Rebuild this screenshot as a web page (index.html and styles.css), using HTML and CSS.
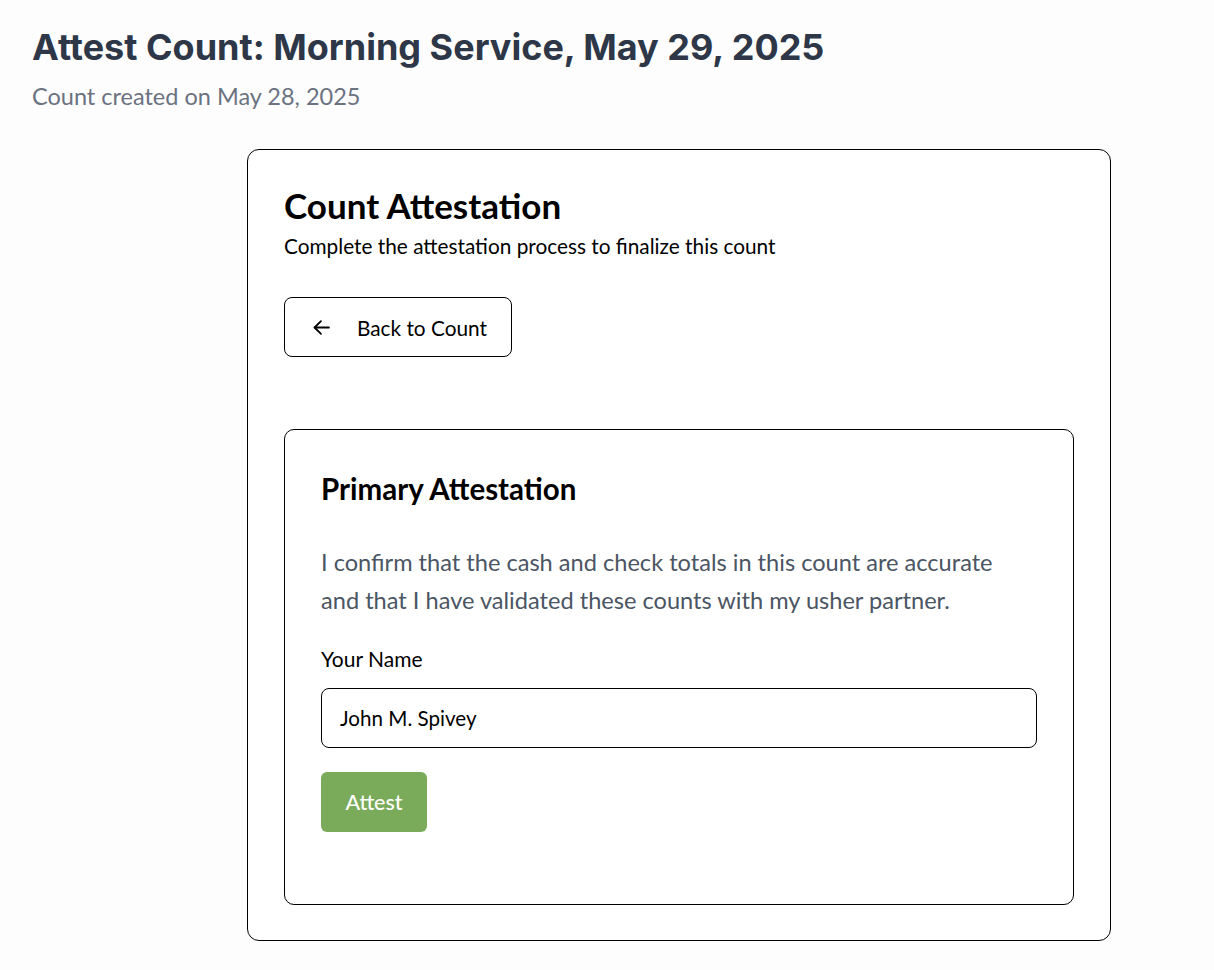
FILE: index.html
```html
<!DOCTYPE html>
<html lang="en">
<head>
<meta charset="utf-8">
<title>Attest Count</title>
<link rel="stylesheet" href="styles.css">
</head>
<body>
<div class="page">
  <header class="page-header">
    <h1 class="page-title">Attest Count: Morning Service, May 29, 2025</h1>
    <p class="page-subtitle">Count created on May 28, 2025</p>
  </header>
  <main class="content">
    <section class="card">
      <h2 class="card-title">Count Attestation</h2>
      <p class="card-desc">Complete the attestation process to finalize this count</p>
      <button class="back-btn" type="button">
        <svg class="back-icon" width="17" height="17" viewBox="0 0 16 16" fill="none" stroke="#000" stroke-width="1.7" stroke-linecap="round" stroke-linejoin="round"><path d="M15 8H1.5"/><path d="M7.5 2L1.5 8l6 6"/></svg>
        <span>Back to Count</span>
      </button>
      <section class="inner-card">
        <h3 class="inner-title">Primary Attestation</h3>
        <p class="statement">I confirm that the cash and check totals in this count are accurate and that I have validated these counts with my usher partner.</p>
        <label class="field-label" for="name">Your Name</label>
        <input class="field-input" id="name" type="text" value="John M. Spivey">
        <button class="attest-btn" type="button">Attest</button>
      </section>
    </section>
  </main>
</div>
</body>
</html>
```
FILE: styles.css
```css
* { box-sizing: border-box; }
html, body { margin: 0; padding: 0; background: #fdfdfd; }
body { font-family: Lato, "Noto Sans", sans-serif; color: #000; }
.page { padding: 24px 32px 40px; }
.page-header { margin-bottom: 38px; }
.page-title {
  margin: 0;
  font-family: Inter, "Liberation Sans", sans-serif;
  font-weight: 700;
  font-size: 36px;
  line-height: 46px;
  color: #2d3748;
}
.page-subtitle {
  margin: 11px 0 0;
  font-size: 23.5px;
  line-height: 30px;
  color: #6b7280;
}
.content { padding-left: 215px; }
.card {
  width: 864px;
  border: 1px solid #000;
  border-radius: 12px;
  padding: 33px 36px 35px;
  background: #fff;
}
.card-title {
  margin: 0;
  font-size: 35px;
  font-weight: 700;
  line-height: 44px;
}
.card-desc {
  margin: 6px 0 0;
  font-size: 20.8px;
  line-height: 26px;
}
.back-btn {
  margin-top: 38px;
  display: flex;
  align-items: center;
  gap: 27px;
  height: 60px;
  width: 228px;
  padding: 0 0 0 28px;
  border: 1px solid #000;
  border-radius: 8px;
  background: #fff;
  font-family: Lato, sans-serif;
  font-size: 20.8px;
  color: #000;
}
.back-icon { flex: none; }
.inner-card {
  margin-top: 72px;
  border: 1px solid #000;
  border-radius: 10px;
  padding: 40px 36px 72px;
  display: flex;
  flex-direction: column;
  align-items: flex-start;
}
.inner-title {
  margin: 0;
  font-size: 29.5px;
  font-weight: 700;
  line-height: 38px;
}
.statement {
  margin: 35px 0 0;
  font-size: 23.6px;
  line-height: 38px;
  color: #4b5563;
  max-width: 700px;
}
.field-label {
  margin-top: 27px;
  font-size: 21px;
  line-height: 26px;
}
.field-input {
  margin-top: 16px;
  width: 100%;
  height: 60px;
  border: 1px solid #000;
  border-radius: 8px;
  padding: 0 18px;
  font-family: Lato, sans-serif;
  font-size: 20.6px;
  color: #000;
  background: #fff;
}
.attest-btn {
  margin-top: 24px;
  height: 60px;
  width: 106px;
  border: none;
  border-radius: 6px;
  background: #7aab5a;
  color: #fff;
  font-family: Lato, sans-serif;
  font-size: 21.5px;
  font-weight: 500;
}
```
